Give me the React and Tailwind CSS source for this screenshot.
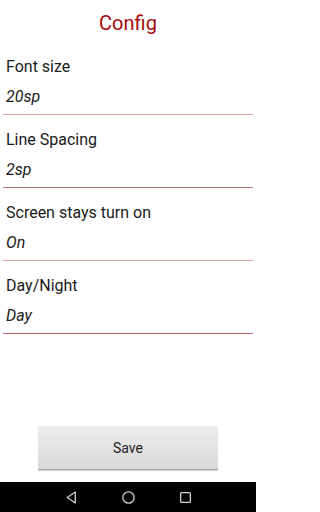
import React from "react";

const settings = [
  { label: "Font size", value: "20sp", line: "border-[#dba0a0]" },
  { label: "Line Spacing", value: "2sp", line: "border-[#b87474]" },
  { label: "Screen stays turn on", value: "On", line: "border-[#dba0a0]" },
  { label: "Day/Night", value: "Day", line: "border-[#c46f6f]" },
];

export default function App() {
  return (
    <div className="flex flex-col h-[512px] w-[256px] bg-white font-['Roboto',sans-serif] overflow-hidden">
      {/* Title */}
      <div className="pt-[9px] pb-[5px] text-center text-[20px] leading-[28px] text-[#a30b0b]">
        Config
      </div>

      {/* Settings list */}
      <div className="flex flex-col">
        {settings.map((s) => (
          <div key={s.label} className={`mx-[3px] px-[3px] pt-[13px] pb-[5px] border-b ${s.line}`}>
            <div className="text-[16px] leading-[24px] text-[#1a1a1a]">{s.label}</div>
            <div className="mt-[6px] text-[16px] leading-[24px] italic text-[#1a1a1a]">{s.value}</div>
          </div>
        ))}
      </div>

      <div className="flex-1" />

      {/* Save button */}
      <div className="flex justify-center mb-[12px]">
        <button className="w-[180px] h-[44px] pt-[2px] bg-gradient-to-b from-[#ededed] to-[#d9d9d9] border-b border-[#a8a8a8] shadow-[0_1px_1px_rgba(0,0,0,0.2)] rounded-[1px] text-[14px] text-[#222]">
          Save
        </button>
      </div>

      {/* Android nav bar */}
      <div className="h-[30px] bg-black flex items-center justify-center gap-[44px] text-[#d0d0d0]">
        <svg width="13" height="13" viewBox="0 0 12 12" fill="none" stroke="currentColor" strokeWidth="1.2">
          <path d="M9.5 1 L2 6 L9.5 11 Z" strokeLinejoin="round" />
        </svg>
        <svg width="13" height="13" viewBox="0 0 12 12" fill="none" stroke="currentColor" strokeWidth="1.2">
          <circle cx="6" cy="6" r="5.2" />
        </svg>
        <svg width="13" height="13" viewBox="0 0 12 12" fill="none" stroke="currentColor" strokeWidth="1.2">
          <rect x="1.5" y="1.5" width="9" height="9" rx="0.8" />
        </svg>
      </div>
    </div>
  );
}
